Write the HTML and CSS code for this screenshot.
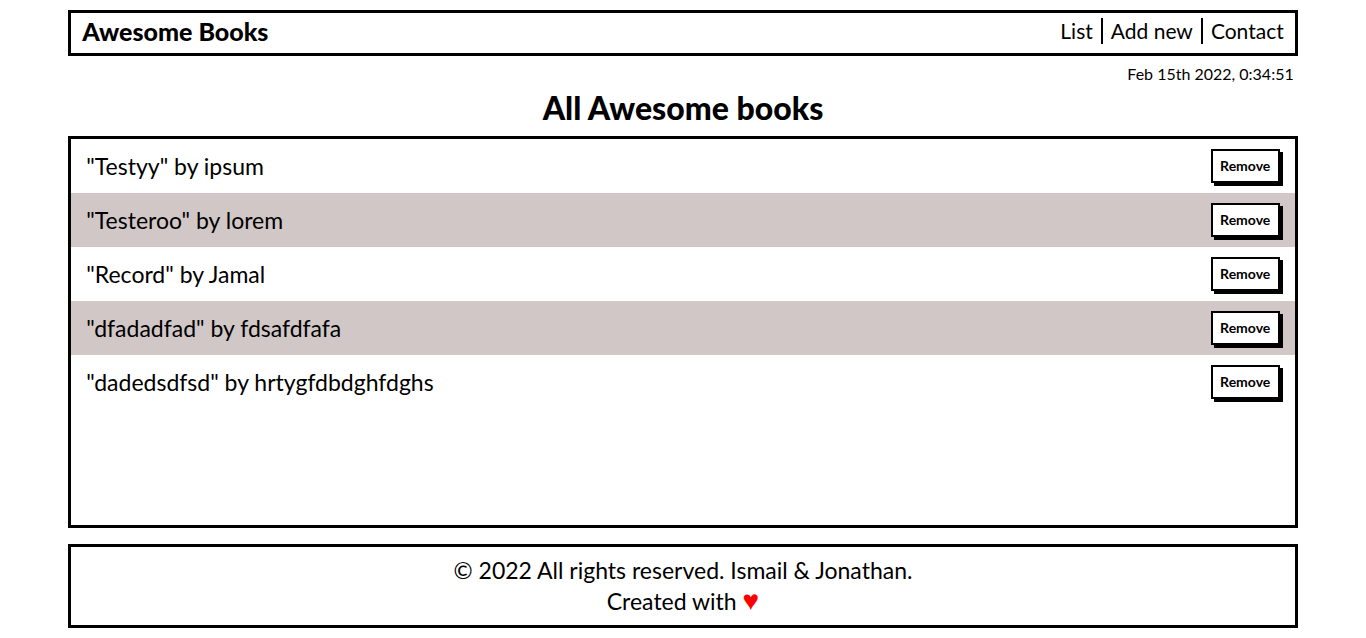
FILE: index.html
```html
<!DOCTYPE html>
<html lang="en">
<head>
  <meta charset="utf-8">
  <meta name="viewport" content="width=device-width, initial-scale=1">
  <title>Awesome Books</title>
  <link rel="stylesheet" href="styles.css">
</head>
<body>
  <header class="header">
    <a class="logo" href="#">Awesome Books</a>
    <nav>
      <ul class="menu">
        <li class="menu-item"><a href="#list">List</a></li>
        <li class="menu-item"><a href="#add">Add new</a></li>
        <li class="menu-item"><a href="#contact">Contact</a></li>
      </ul>
    </nav>
  </header>
  <p class="date">Feb 15th 2022, 0:34:51</p>
  <main class="main">
    <h1 class="title">All Awesome books</h1>
    <ul class="books" id="list">
      <li class="book"><span>"Testyy" by ipsum</span><button class="remove" type="button">Remove</button></li>
      <li class="book"><span>"Testeroo" by lorem</span><button class="remove" type="button">Remove</button></li>
      <li class="book"><span>"Record" by Jamal</span><button class="remove" type="button">Remove</button></li>
      <li class="book"><span>"dfadadfad" by fdsafdfafa</span><button class="remove" type="button">Remove</button></li>
      <li class="book"><span>"dadedsdfsd" by hrtygfdbdghfdghs</span><button class="remove" type="button">Remove</button></li>
    </ul>
  </main>
  <footer class="footer">
    <p>© 2022 All rights reserved. Ismail &amp; Jonathan.</p>
    <p>Created with <span class="heart">♥</span></p>
  </footer>
</body>
</html>
```
FILE: styles.css
```css
* {
  box-sizing: border-box;
  margin: 0;
  padding: 0;
}

body {
  display: flex;
  flex-direction: column;
  min-height: 100vh;
  padding: 10px 5%;
  background: #fff;
  color: #000;
  font-family: Lato, "Open Sans", sans-serif;
  font-size: 23px;
}

a {
  color: inherit;
  text-decoration: none;
}

ul {
  list-style: none;
}

.header {
  display: flex;
  justify-content: space-between;
  align-items: center;
  padding: 5px 11px 9px;
  border: 3px solid #000;
}

.logo {
  font-size: 25px;
  font-weight: 900;
  line-height: 26px;
}

.menu {
  display: flex;
  font-size: 21px;
  line-height: 26px;
}

.menu-item + .menu-item {
  margin-left: 8px;
  padding-left: 8px;
  border-left: 2px solid #000;
}

.date {
  padding: 8px 4px 0;
  font-size: 16px;
  line-height: 20px;
  text-align: right;
}

.main {
  display: flex;
  flex: 1;
  flex-direction: column;
}

.title {
  padding: 4px 0 8px;
  font-size: 32px;
  font-weight: 900;
  line-height: 40px;
  text-align: center;
}

.books {
  flex: 1;
  border: 3px solid #000;
}

.book {
  display: flex;
  justify-content: space-between;
  align-items: center;
  padding: 10px 15px;
}

.book:nth-child(even) {
  background: #d1c7c7;
}

.remove {
  min-width: 69px;
  padding: 6px 7px;
  border: 2px solid #000;
  background: #fff;
  box-shadow: 3px 3px 0 #000;
  color: #000;
  font-family: inherit;
  font-size: 14px;
  font-weight: 700;
  line-height: 18px;
  cursor: pointer;
}

.footer {
  margin-top: 16px;
  padding: 8px;
  border: 3px solid #000;
  line-height: 31px;
  text-align: center;
}

.heart {
  color: #f00;
  font-family: "Liberation Sans", sans-serif;
  font-size: 28px;
  line-height: 1;
}
```
